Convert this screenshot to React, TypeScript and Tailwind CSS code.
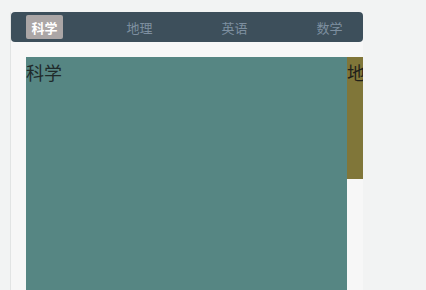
import React from "react";

export default function App() {
  const tabs = ["科学", "地理", "英语", "数学"];
  return (
    <div
      className="w-[426px] h-[290px] overflow-hidden bg-[#f2f3f3]"
      style={{ fontFamily: '"Noto Sans CJK SC", "Noto Sans", sans-serif' }}
    >
      <div className="ml-[10px] mt-[12px] w-[353px] h-[300px] bg-[#f7f7f7] border-l border-[#e2e4e4] overflow-hidden">
        <div className="h-[30px] bg-[#3d4f5b] rounded-[4px] flex items-center justify-between px-[15px]">
          {tabs.map((t, i) => (
            <div
              key={t}
              className={
                i === 0
                  ? "h-[24px] w-[37px] rounded-[2px] bg-[#aba6a6] text-white font-bold text-[13px] flex items-center justify-center leading-none"
                  : "h-[24px] w-[37px] text-[#7e8fa0] text-[13px] flex items-center justify-center leading-none"
              }
            >
              {t}
            </div>
          ))}
        </div>
        <div className="pl-[15px] pt-[15px] flex items-start">
          <div className="w-[321px] h-[240px] shrink-0 bg-[#568683] text-[#1f2a2a] text-[18px] leading-[30px]">
            科学
          </div>
          <div className="w-[321px] h-[122px] shrink-0 bg-[#807639] text-[#1f1f1a] text-[18px] leading-[30px]">
            地理
          </div>
        </div>
      </div>
    </div>
  );
}
